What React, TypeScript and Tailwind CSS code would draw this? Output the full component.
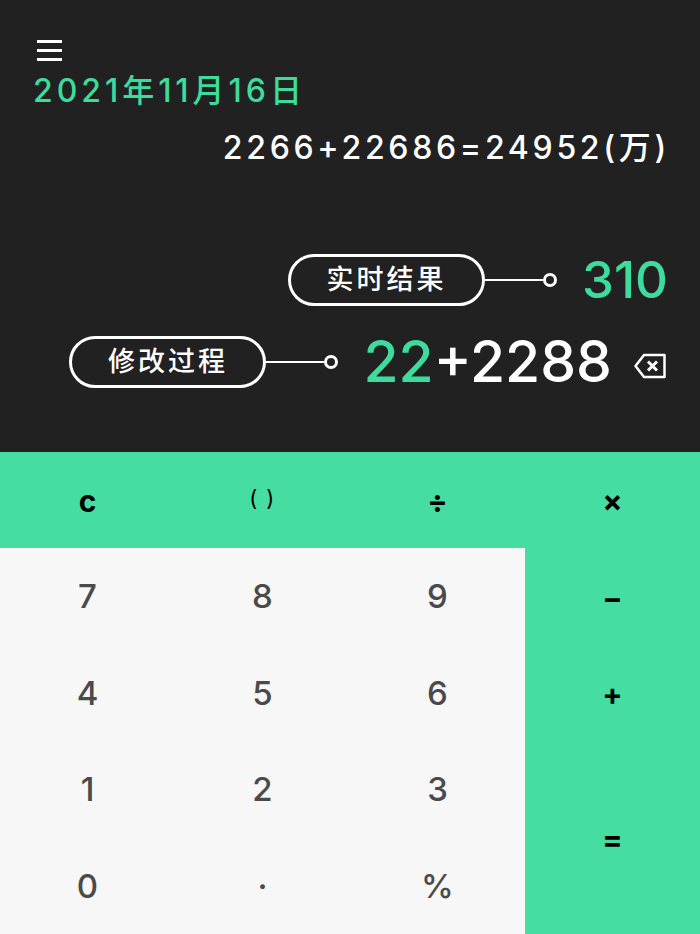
const FONT = "font-['Inter','Noto_Sans_CJK_SC',sans-serif]";

const topKeys = ['c', '( )', '÷', '×'];
const numKeys = ['7', '8', '9', '4', '5', '6', '1', '2', '3', '0', '·', '%'];

function Tag({ label }: { label: string }) {
  return (
    <div className="flex items-center">
      <div className="w-[197px] h-[52px] rounded-full border-[3px] border-white flex items-center justify-center pt-[1px] text-[27px] font-medium tracking-[3px] text-white">
        {label}
      </div>
      <div className="w-[58px] h-[2px] bg-white" />
      <div className="w-[14px] h-[14px] rounded-full border-[3px] border-white" />
    </div>
  );
}

export default function App() {
  return (
    <div className={`w-[700px] h-[934px] overflow-hidden flex flex-col ${FONT}`}>
      {/* 显示区 */}
      <div className="h-[452px] bg-[#212121] pt-[40px] flex flex-col">
        <div className="pl-[37px] flex flex-col gap-[6px]">
          <div className="w-[25px] h-[3px] bg-white" />
          <div className="w-[25px] h-[3px] bg-white" />
          <div className="w-[25px] h-[3px] bg-white" />
        </div>
        <div className="pl-[33px] mt-[10px] h-[40px] leading-[40px] text-[32px] font-medium tracking-[3.95px] text-[#3ddc9c]">2021年11月16日</div>
        <div className="pr-[30px] mt-[17px] h-[40px] leading-[40px] text-right text-[32px] font-medium tracking-[3.7px] text-white">2266+22686=24952(万)</div>

        <div className="mt-[84px] pr-[32px] flex items-center justify-end">
          <Tag label="实时结果" />
          <div className="ml-[25px] text-[51px] leading-[56px] font-medium text-[#3ddc9c]">310</div>
        </div>

        <div className="mt-[24px] pr-[34px] flex items-center justify-end">
          <Tag label="修改过程" />
          <div className="ml-[25px] text-[57px] leading-[60px] font-medium text-white">
            <span className="text-[#3ddc9c]">22</span>+2288
          </div>
          <svg className="ml-[22px] mt-[7px]" width="32" height="26" viewBox="0 0 32 26" fill="none" stroke="#ffffff" strokeWidth="2.5" strokeLinejoin="round">
            <path d="M10 2H30.5V24H10L1.5 13Z" />
            <path d="M14 8.5L23 17.5M23 8.5L14 17.5" strokeWidth="3" />
          </svg>
        </div>
      </div>

      {/* 键盘 */}
      <div className="flex-1 bg-[#46dda2] grid grid-cols-[175px_175px_175px_175px] grid-rows-5">
        {topKeys.map((k) => (
          <div key={k} className={`flex items-center justify-center text-black ${k === '( )' ? 'text-[22px] tracking-[1.5px] pb-[3px]' : 'text-[30px] font-bold pt-[2px]'}`}>
            {k}
          </div>
        ))}
        <div className="col-span-3 row-span-4 bg-[#f7f7f7] grid grid-cols-3 grid-rows-4">
          {numKeys.map((k) => (
            <div key={k} className="flex items-center justify-center pt-[1px] text-[33px] font-medium text-[#4a4a4a]">
              {k}
            </div>
          ))}
        </div>
        <div className="flex items-center justify-center pt-[3px] text-[30px] font-bold text-black">−</div>
        <div className="flex items-center justify-center pt-[3px] text-[30px] font-bold text-black">+</div>
        <div className="row-span-2 flex items-center justify-center pt-[3px] text-[30px] font-bold text-black">=</div>
      </div>
    </div>
  );
}
